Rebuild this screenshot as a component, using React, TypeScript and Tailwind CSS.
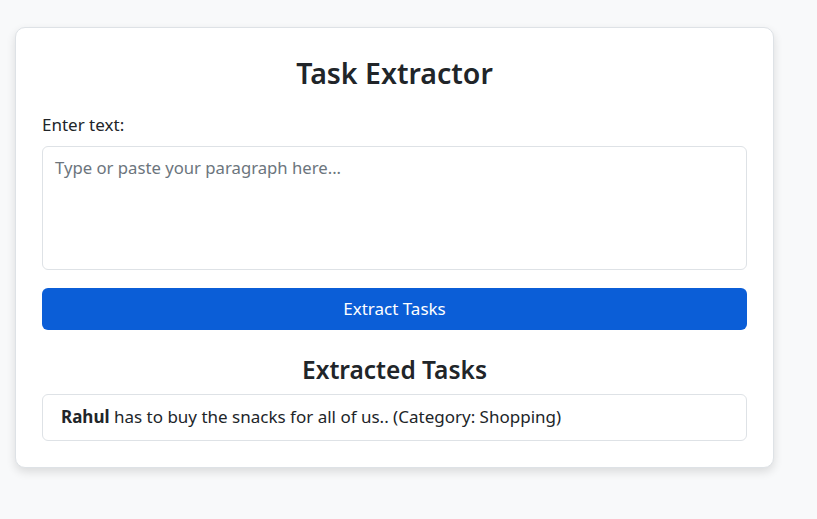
import React, { useState } from 'react';

const font = { fontFamily: '"Segoe UI", "Noto Sans", "Liberation Sans", sans-serif' };

export default function App() {
  const [text, setText] = useState('');

  return (
    <div className="min-h-[519px] bg-[#f8f9fa] pt-[27px] pl-[15px] text-[#212529]" style={font}>
      <div className="w-[759px] rounded-[10px] border border-[#dee2e6] bg-white px-[26px] pt-[28px] pb-[26px] shadow-[0_4px_10px_rgba(0,0,0,0.12)]">
        <h2 className="mb-[22px] text-center text-[28.5px] font-semibold leading-[1.2]">Task Extractor</h2>

        <label className="mb-[9px] block text-[17px] leading-[25px]">Enter text:</label>
        <textarea
          value={text}
          onChange={(e) => setText(e.target.value)}
          placeholder="Type or paste your paragraph here..."
          className="block h-[124px] w-full resize-none rounded-[6px] border border-[#dee2e6] px-[12px] py-[8px] text-[16.7px] leading-[25px] outline-none placeholder:text-[#6c757d]"
        />

        <button className="mt-[18px] block h-[42px] w-full rounded-[6px] bg-[#0b5ed7] text-[17px] text-white">
          Extract Tasks
        </button>

        <h3 className="mt-[25px] mb-[9px] text-center text-[24.5px] font-semibold leading-[1.2]">Extracted Tasks</h3>

        <ul>
          <li className="rounded-[6px] border border-[#dee2e6] px-[18px] py-[10.5px] text-[17px] leading-[24px]">
            <strong className="font-bold">Rahul</strong> has to buy the snacks for all of us.. (Category: Shopping)
          </li>
        </ul>
      </div>
    </div>
  );
}
